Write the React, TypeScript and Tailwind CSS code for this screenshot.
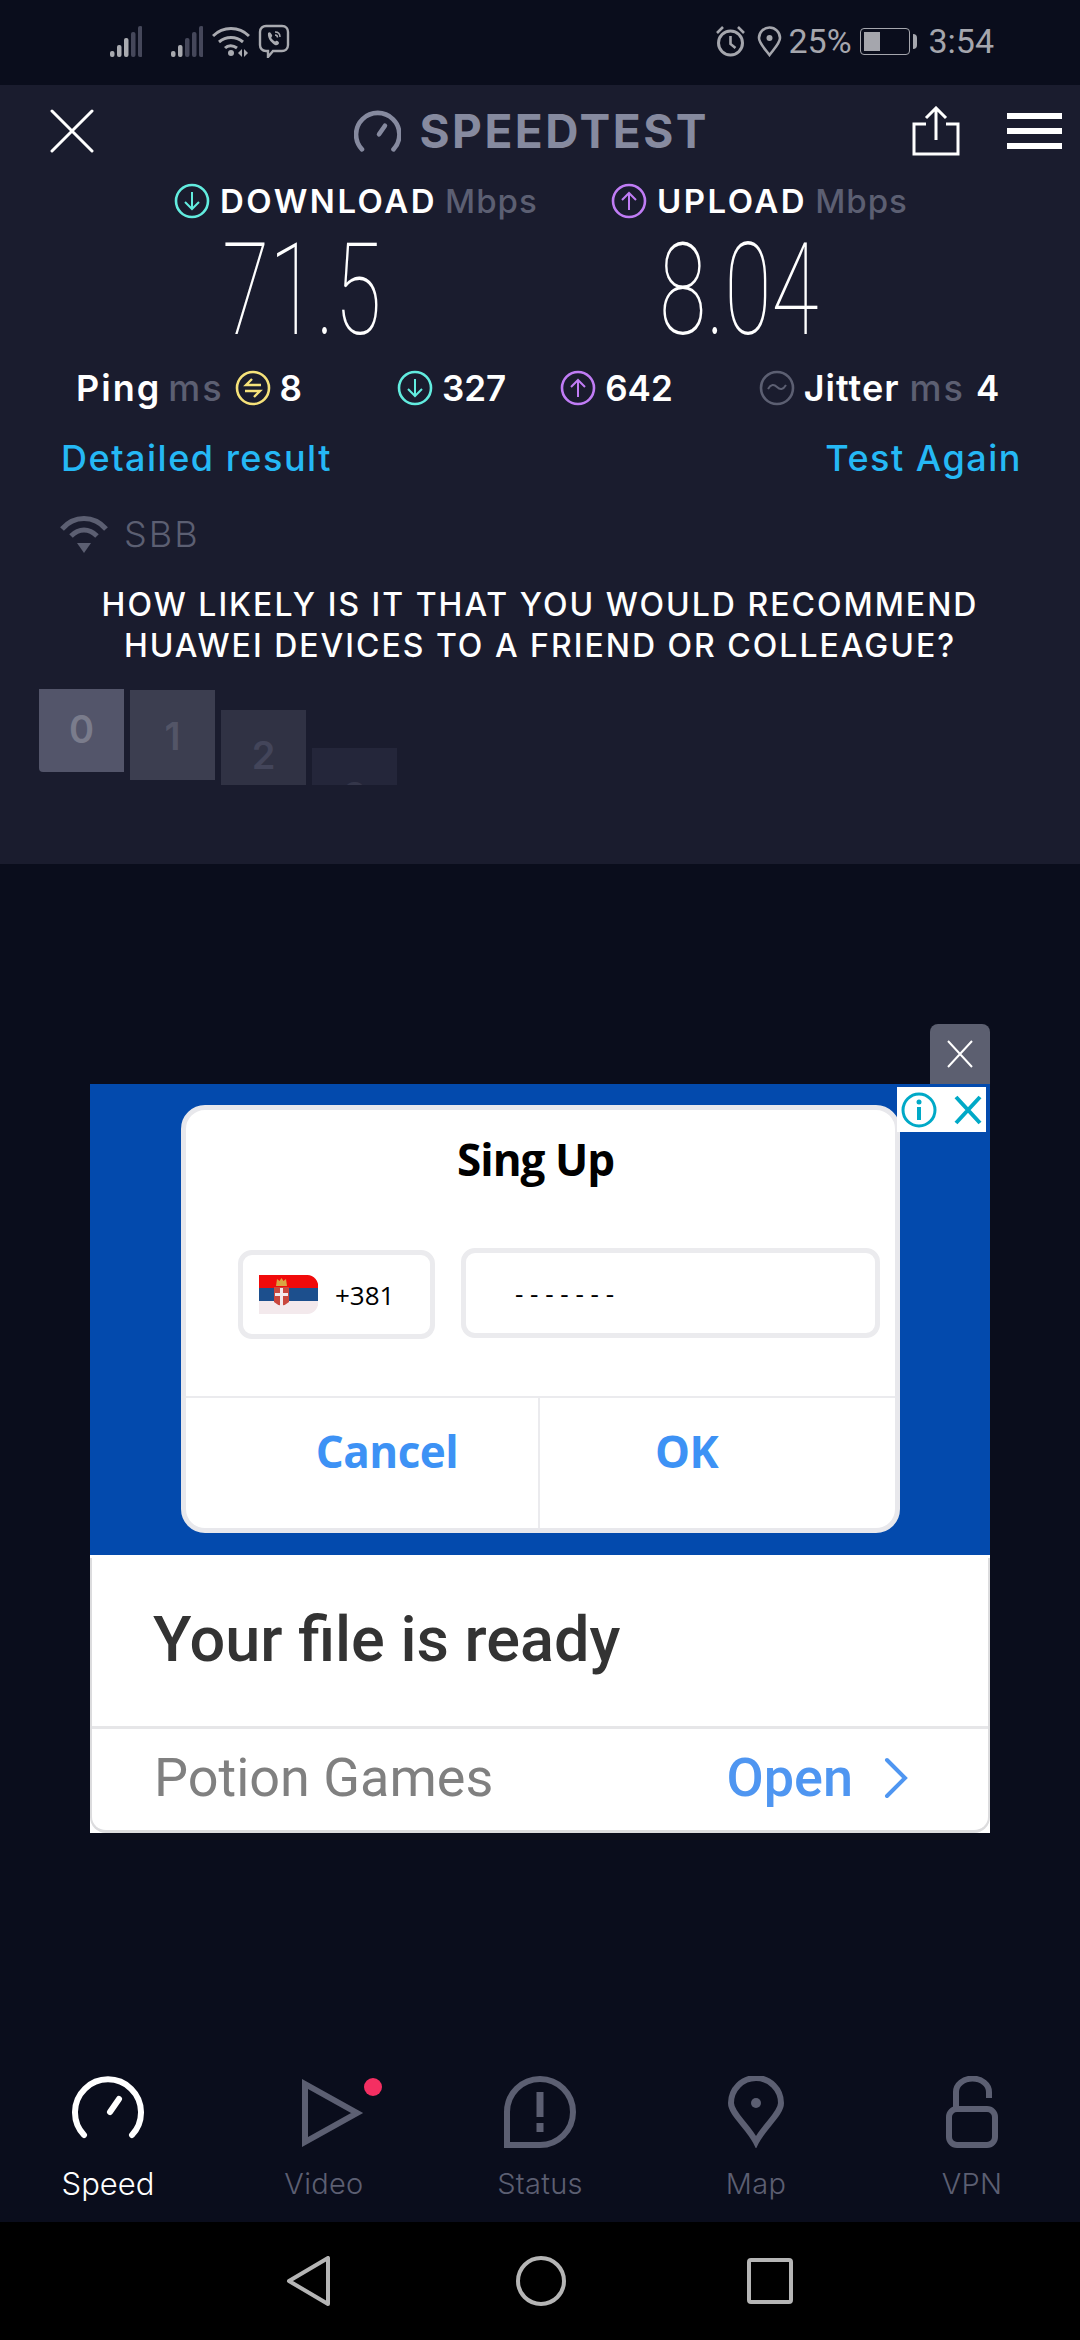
function Signal({ lit }: { lit: number }) {
  const heights = [6, 12, 19, 25, 31];
  return (
    <svg width="32" height="31" viewBox="0 0 32 31">
      {heights.map((h, i) => (
        <rect key={i} x={i * 7} y={31 - h} width="4.5" height={h} rx="2" fill={i < lit ? "#a9aab0" : "#45475a"} />
      ))}
    </svg>
  );
}

function CircleIcon({ color, kind }: { color: string; kind: "down" | "up" | "ping" | "jitter" }) {
  return (
    <svg width="36" height="36" viewBox="0 0 36 36" fill="none" stroke={color}>
      <circle cx="18" cy="18" r="16" strokeWidth="2.6" />
      {kind === "down" && <path d="M18 9v17M11 19l7 7 7-7" strokeWidth="2" />}
      {kind === "up" && <path d="M18 27V10M11 17l7-7 7 7" strokeWidth="2" />}
      {kind === "ping" && <path d="M26 15H11l6-6M10 21h15l-6 6" strokeWidth="2.4" />}
      {kind === "jitter" && <path d="M9 19c3-5 6-5 9-2s6 3 9-2" strokeWidth="2" />}
    </svg>
  );
}

function Gauge({ size, height, color, stroke }: { size: number; height: number; color: string; stroke: number }) {
  return (
    <svg width={size} height={height} viewBox="0 0 72 64" fill="none" stroke={color} strokeWidth={stroke} strokeLinecap="round">
      <path d="M12 60A33 33 0 1 1 60 60" />
      <path d="M47 24L38 37" />
    </svg>
  );
}

const tabs = [
  { label: "Speed", active: true },
  { label: "Video" },
  { label: "Status" },
  { label: "Map" },
  { label: "VPN" },
];

function TabIcon({ label }: { label: string }) {
  const c = "#5c5f72";
  if (label === "Speed")
    return (
      <div className="mb-[9px]">
        <Gauge size={72} height={64} color="#ffffff" stroke={6} />
      </div>
    );
  if (label === "Video")
    return (
      <div className="relative ml-[36px]">
        <svg width="80" height="70" viewBox="0 0 80 70" fill="none" stroke={c} strokeWidth="6">
          <path d="M3 6v58l52-29z" />
        </svg>
        <span className="absolute right-0 top-0 h-[18px] w-[18px] rounded-full bg-[#f42f62]" />
      </div>
    );
  if (label === "Status")
    return (
      <svg width="72" height="72" viewBox="0 0 72 72" fill="none" stroke={c} strokeWidth="6">
        <path d="M3 69V36a33 33 0 0 1 66 0 33 33 0 0 1-33 33z" />
        <path d="M36 16v25" strokeWidth="7" />
        <path d="M36 47v9" strokeWidth="7" />
      </svg>
    );
  if (label === "Map")
    return (
      <svg width="56" height="72" viewBox="0 0 56 72" fill="none" stroke={c} strokeWidth="6">
        <path d="M28 66C20 50 3 38 3 27a25 25 0 0 1 50 0c0 11-17 23-25 39z" />
        <circle cx="28" cy="27" r="5" fill={c} stroke="none" />
      </svg>
    );
  return (
    <svg width="52" height="72" viewBox="0 0 52 72" fill="none" stroke={c} strokeWidth="6">
      <rect x="3" y="33" width="46" height="36" rx="8" />
      <path d="M10 33V16a16 13 0 0 1 33 0v6" />
    </svg>
  );
}

export default function App() {
  return (
    <div className="flex h-[2340px] w-[1080px] flex-col overflow-hidden bg-[#0a0d1c] font-['Inter',sans-serif] text-white">
      {/* status bar */}
      <div className="flex h-[85px] shrink-0 items-center justify-between pl-[110px] pr-[86px] pb-[3px] font-['Roboto',sans-serif] text-[34px] text-[#a5a6ad]">
        <div className="flex items-center">
          <Signal lit={3} />
          <div className="ml-[29px]">
            <Signal lit={2} />
          </div>
          <svg className="ml-[9px]" width="38" height="31" viewBox="0 0 38 31" fill="none" stroke="#a9aab0" strokeWidth="3">
            <path d="M1 10c10-10 26-10 36 0M7 16c7-6 17-6 24 0M13 22c3-3 8-3 12 0" />
            <circle cx="19" cy="27" r="3" fill="#a9aab0" stroke="none" />
            <path d="M30 23v8l-4-4zM32 23v8l4-4z" fill="#a9aab0" stroke="none" />
          </svg>
          <svg className="ml-[8px]" width="32" height="34" viewBox="0 0 32 34" fill="none" stroke="#a9aab0" strokeWidth="2.4">
            <path d="M8 2h16c4 0 6 3 6 6v13c0 4-3 6-6 6H15l-5 6v-6H8c-4 0-6-3-6-6V8c0-4 3-6 6-6z" />
            <path d="M10 9c2-2 3 0 4 2s-2 2 0 4 3 3 4 2 3 1 3 2-2 3-4 2-8-6-7-12z" fill="#a9aab0" stroke="none" />
            <path d="M17 8c3 0 5 2 5 5M17 11c1.500 0 2.500 1 2.500 2.500" strokeWidth="1.500" />
          </svg>
        </div>
        <div className="flex items-center">
          <svg width="31" height="32" viewBox="0 0 31 32" fill="none" stroke="#a5a6ad" strokeWidth="3">
            <circle cx="15.500" cy="18" r="12" />
            <path d="M15.500 11v8l5 4M2 8l6-6M29 8l-6-6" strokeWidth="2.6" />
          </svg>
          <svg className="ml-[11px]" width="25" height="31" viewBox="0 0 25 31" fill="none" stroke="#a5a6ad" strokeWidth="2.6">
            <path d="M12.500 29C8 23 2 17 2 12a10.500 10.500 0 0 1 21 0c0 5-6 11-10.500 17z" />
            <circle cx="12.500" cy="12" r="3" fill="#a5a6ad" stroke="none" />
          </svg>
          <span className="ml-[6px] w-[72px] leading-none">25%</span>
          <div className="flex items-center">
            <div className="flex h-[27px] w-[50px] rounded-[4px] border border-[#a5a6ad] p-[3px]">
              <div className="w-[16px] bg-[#a5a6ad]" />
            </div>
            <div className="ml-[3px] h-[15px] w-[4px] rounded-r-sm bg-[#a5a6ad]" />
          </div>
          <span className="ml-[11px] leading-none">3:54</span>
        </div>
      </div>

      {/* result panel */}
      <div className="h-[779px] shrink-0 bg-[#1a1c2e]">
        <div className="flex h-[91px] items-center pl-[50px]">
          <svg width="44" height="44" viewBox="0 0 44 44" fill="none" stroke="#ffffff" strokeWidth="3" strokeLinecap="round">
            <path d="M2 2l40 40M42 2L2 42" />
          </svg>
          <div className="ml-[260px] flex w-[355px] items-center">
            <Gauge size={48} height={42} color="#868a9f" stroke={7} />
            <span className="ml-[18px] text-[46px] font-bold leading-none tracking-[2.5px] text-[#868a9f]">SPEEDTEST</span>
          </div>
          <svg className="ml-[203px]" width="48" height="50" viewBox="0 0 48 50" fill="none" stroke="#ffffff" strokeWidth="3">
            <path d="M14 18H2v30h44V18H34" />
            <path d="M24 34V3M14 12l10-10 10 10" />
          </svg>
          <div className="ml-[47px] flex w-[55px] flex-col gap-[9px]">
            <div className="h-[6px] bg-white" />
            <div className="h-[6px] bg-white" />
            <div className="h-[6px] bg-white" />
          </div>
        </div>

        <div className="grid grid-cols-[437px_1fr] pl-[174px]">
          <div className="flex h-[50px] items-center">
            <CircleIcon color="#62ecdf" kind="down" />
            <span className="ml-[10px] text-[33px] font-semibold leading-none tracking-[2.5px]">DOWNLOAD</span>
            <span className="ml-[8px] text-[33px] font-medium leading-none tracking-[1px] text-[#5c5f72]">Mbps</span>
          </div>
          <div className="flex h-[50px] items-center">
            <CircleIcon color="#c07cf5" kind="up" />
            <span className="ml-[10px] text-[33px] font-semibold leading-none tracking-[2.5px]">UPLOAD</span>
            <span className="ml-[8px] text-[33px] font-medium leading-none tracking-[1px] text-[#5c5f72]">Mbps</span>
          </div>
          <div className="flex h-[110px] origin-left scale-x-[0.67] items-center pl-[72px] pt-[18px] font-['Roboto',sans-serif] text-[128px] font-thin leading-none">71.5</div>
          <div className="flex h-[110px] origin-left scale-x-[0.67] items-center pl-[72px] pt-[18px] font-['Roboto',sans-serif] text-[128px] font-thin leading-none">8.04</div>
        </div>

        <div className="mt-[27px] flex h-[50px] items-center pl-[76px] text-[36px] font-semibold leading-none">
          <span className="tracking-[2px]">Ping</span>
          <span className="ml-[7px] font-medium tracking-[2px] text-[#5c5f72]">ms</span>
          <div className="ml-[11px]">
            <CircleIcon color="#f6e27a" kind="ping" />
          </div>
          <span className="ml-[9px] text-[35px]">8</span>
          <div className="ml-[95px]">
            <CircleIcon color="#62ecdf" kind="down" />
          </div>
          <span className="ml-[9px] text-[35px]">327</span>
          <div className="ml-[54px]">
            <CircleIcon color="#c07cf5" kind="up" />
          </div>
          <span className="ml-[9px] text-[35px]">642</span>
          <div className="ml-[86px]">
            <CircleIcon color="#5c5f72" kind="jitter" />
          </div>
          <span className="ml-[9px] tracking-[1px]">Jitter</span>
          <span className="ml-[10px] font-medium tracking-[2px] text-[#5c5f72]">ms</span>
          <span className="ml-[11px] text-[35px]">4</span>
        </div>

        <div className="mt-[20px] flex h-[50px] items-center justify-between pl-[61px] pr-[58px] text-[36px] font-medium leading-none tracking-[1.5px] text-[#25b8f5]">
          <span>Detailed result</span>
          <span>Test Again</span>
        </div>

        <div className="mt-[26px] flex h-[50px] items-center pl-[60px]">
          <svg width="48" height="38" viewBox="0 0 48 38" fill="none" stroke="#5c5f72" strokeWidth="5">
            <path d="M2 14c12-14 32-14 44 0M11 21c8-8 18-8 26 0" />
            <path d="M17 28h14l-7 10z" fill="#5c5f72" stroke="none" />
          </svg>
          <span className="ml-[16px] text-[36px] font-light leading-none tracking-[2px] text-[#5c5f72]">SBB</span>
        </div>

        <div className="mt-[25px] text-center text-[32px] font-medium leading-[41px] tracking-[2px]">
          <p>HOW LIKELY IS IT THAT YOU WOULD RECOMMEND</p>
          <p>HUAWEI DEVICES TO A FRIEND OR COLLEAGUE?</p>
        </div>

        <div className="mt-[23px] flex items-start gap-[6px] pl-[39px] text-center text-[38px] font-semibold leading-none">
          <div className="h-[83px] w-[85px] rounded-bl-sm bg-[#53556a] pt-[21px] text-[#7a7c8c]">0</div>
          <div className="mt-[1px] h-[90px] w-[85px] bg-[#3c3e50] pt-[27px] text-[#535567]">1</div>
          <div className="mt-[21px] h-[75px] w-[85px] bg-[#303244] pt-[26px] text-[#43455a]">2</div>
          <div className="mt-[59px] h-[37px] w-[85px] overflow-hidden bg-[#24263a] pt-[29px] text-[#34364a]">3</div>
        </div>
      </div>

      {/* ad */}
      <div className="mt-[160px] flex flex-col items-end px-[90px]">
        <div className="flex h-[60px] w-[60px] items-center justify-center rounded-t-[8px] bg-[#5c5f70]">
          <svg width="28" height="28" viewBox="0 0 28 28" fill="none" stroke="#ffffff" strokeWidth="2">
            <path d="M2 1l24 26M26 1L2 27" />
          </svg>
        </div>
        <div className="relative h-[471px] w-[900px] bg-[#034aad] pl-[91px] pt-[21px] font-['Open_Sans',sans-serif]">
          <div className="absolute right-[4px] top-[3px] flex h-[45px] w-[89px] items-center justify-between bg-white px-[4px]">
            <svg width="36" height="36" viewBox="0 0 36 36" fill="none" stroke="#00a9c7" strokeWidth="3">
              <circle cx="18" cy="18" r="16" />
              <path d="M18 15v13" strokeWidth="4" />
              <circle cx="18" cy="10" r="2.500" fill="#00a9c7" stroke="none" />
            </svg>
            <svg width="28" height="30" viewBox="0 0 28 30" fill="none" stroke="#00a9c7" strokeWidth="4">
              <path d="M2 2l24 26M26 2L2 28" />
            </svg>
          </div>
          <div className="flex h-[428px] w-[719px] flex-col rounded-[24px] border-[5px] border-[#e8e8ec] bg-white">
            <div className="flex h-[286px] flex-col">
              <p className="mt-[19px] pr-[10px] text-center text-[44px] font-bold leading-[60px] tracking-[-1px] text-black">Sing Up</p>
              <div className="mt-[59px] flex items-start pl-[52px]">
                <div className="mt-[2px] flex h-[89px] w-[197px] items-center rounded-[14px] border-[5px] border-[#ebebee] pl-[16px]">
                  <svg width="59" height="39" viewBox="0 0 59 39">
                    <path d="M0 0h48a11 11 0 0 1 11 13v13a11 11 0 0 1-11 13H0z" fill="#f3e9ec" />
                    <path d="M0 13h59v13H0z" fill="#1c4f8d" />
                    <path d="M0 0h48a11 11 0 0 1 11 13H0z" fill="#f10a0a" />
                    <path d="M15 12h15v15q-7.500 7-15 0z" fill="#c9473d" />
                    <path d="M21 13h3v18h-3zM16 18h13v3H16z" fill="#f3e9ec" />
                    <path d="M18 4l2.500 2 2-3 2 3 2.500-2 1 7H17z" fill="#d9a441" />
                  </svg>
                  <span className="ml-[17px] text-[26px] leading-none text-black">+381</span>
                </div>
                <div className="ml-[26px] flex h-[90px] w-[419px] items-center rounded-[14px] border-[5px] border-[#ebebee] pl-[49px] text-[26px] leading-none text-black">
                  - - - - - - -
                </div>
              </div>
            </div>
            <div className="flex flex-1 border-t-[2px] border-[#ebebee] text-[44px] font-bold leading-none tracking-[-0.5px] text-[#3d92f5]">
              <div className="flex w-[354px] items-center justify-center border-r-[2px] border-[#ebebee] pb-[24px] pl-[50px]">Cancel</div>
              <div className="flex flex-1 items-center justify-center pb-[24px] pr-[62px]">OK</div>
            </div>
          </div>
        </div>
        <div className="h-[278px] w-[900px] bg-white pt-[3px] font-['Roboto',sans-serif]">
          <div className="flex h-full flex-col rounded-b-[16px] border-x-[2px] border-b-[3px] border-[#dcdcde] border-t-[#e4e4e8]">
            <div className="flex h-[168px] items-center pb-[6px] pl-[61px] text-[63px] font-medium leading-none text-[#333333]">Your file is ready</div>
            <div className="flex flex-1 items-center justify-between border-t-[3px] border-[#e6e6e8] pb-[4px] pl-[62px] pr-[79px] text-[54px] leading-none">
              <span className="text-[#808080]">Potion Games</span>
              <div className="flex items-center font-medium text-[#4f96f1]">
                <span>Open</span>
                <svg className="ml-[30px]" width="26" height="42" viewBox="0 0 26 42" fill="none" stroke="#4f96f1" strokeWidth="4" strokeLinecap="round">
                  <path d="M4 3l18 18L4 39" />
                </svg>
              </div>
            </div>
          </div>
        </div>
      </div>

      {/* tabs */}
      <div className="mt-auto grid shrink-0 grid-cols-5 pb-[20px]">
        {tabs.map((t) => (
          <div key={t.label} className="flex flex-col items-center">
            <div className="flex h-[76px] items-end">
              <TabIcon label={t.label} />
            </div>
            <span className={`mt-[18px] font-light leading-[36px] ${t.active ? "text-[31px] text-white" : "text-[29px] tracking-[0.3px] text-[#5c5f72]"}`}>{t.label}</span>
          </div>
        ))}
      </div>

      {/* android nav */}
      <div className="flex h-[118px] shrink-0 items-center bg-black pl-[286px] pb-[1px]">
        <svg width="46" height="50" viewBox="0 0 46 50" fill="none" stroke="#b5b5b5" strokeWidth="4" strokeLinejoin="round">
          <path d="M42 2v46L3 25z" />
        </svg>
        <svg className="ml-[184px]" width="50" height="50" viewBox="0 0 50 50" fill="none" stroke="#b5b5b5" strokeWidth="4">
          <circle cx="25" cy="25" r="23" />
        </svg>
        <svg className="ml-[181px]" width="46" height="46" viewBox="0 0 46 46" fill="none" stroke="#b5b5b5" strokeWidth="4">
          <rect x="2" y="2" width="42" height="42" rx="2" />
        </svg>
      </div>
    </div>
  );
}
